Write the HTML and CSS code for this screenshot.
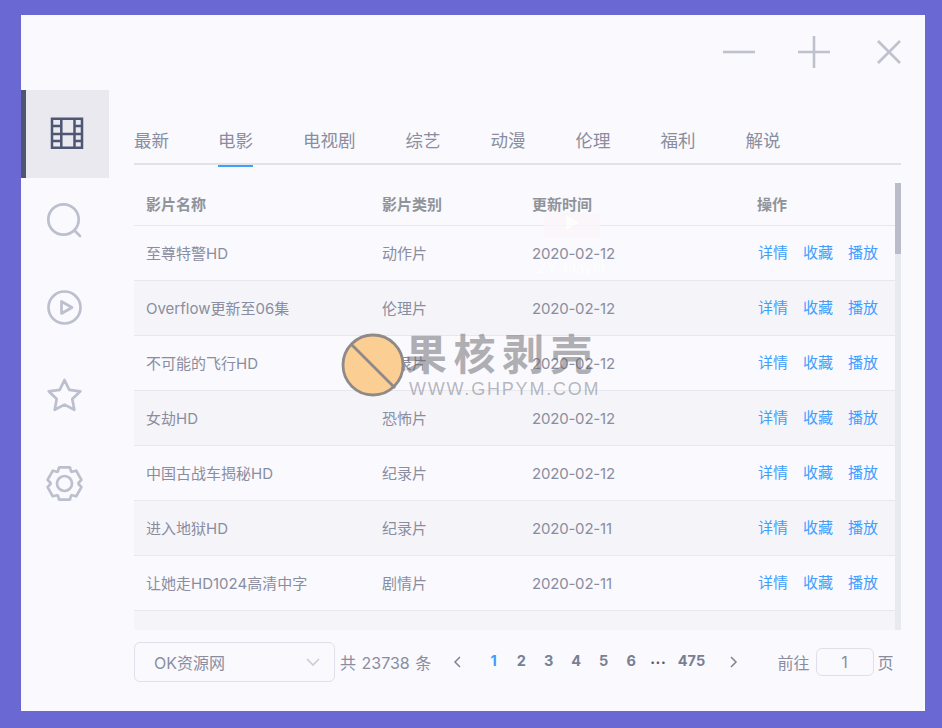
FILE: index.html
```html
<!DOCTYPE html>
<html lang="zh-CN">
<head>
<meta charset="utf-8">
<title>ZY Player</title>
<link rel="stylesheet" href="styles.css">
</head>
<body>
<div class="window">
  <nav class="sidebar">
    <div class="nav-item active">
      <svg class="nav-icon film" viewBox="0 0 36 36"><path d="M5 4.700h30v29.100H5zM14.300 4.700v29.100M27.500 4.700v29.100M5 12h9.300M5 20h9.300M5 27h9.300M27.500 12H35M27.500 20H35M27.500 27H35M14.300 20h13.200"/></svg>
    </div>
    <div class="nav-item">
      <svg class="nav-icon" viewBox="0 0 36 36"><circle cx="16.500" cy="17.500" r="15.200"/><path d="M28 29l5 5"/></svg>
    </div>
    <div class="nav-item">
      <svg class="nav-icon" viewBox="0 0 36 36"><circle cx="17.500" cy="17.500" r="16"/><path d="M14.500 11.500v12l10.500-6z"/></svg>
    </div>
    <div class="nav-item">
      <svg class="nav-icon" viewBox="0 0 36 36"><path d="M17.500 2l4.800 9.800 11 1.500-8 7.700 2 10.800-9.800-5.200-9.800 5.200 2-10.800-8-7.700 11-1.500z"/></svg>
    </div>
    <div class="nav-item">
      <svg class="nav-icon" viewBox="0 0 36 36"><circle cx="17.500" cy="17.500" r="7.500"/><path d="M12.100 1.400H22.900L24.100 5.300 24.900 5.800 29.200 4.700 34.400 13.900 31.500 17V18L34.400 21.100 29.200 30.300 24.900 29.200 24.100 29.700 22.900 33.600H12.100L10.900 29.700 10.100 29.200 5.800 30.300 .6 21.100 3.500 18V17L.6 13.900 5.800 4.700 10.100 5.800 10.900 5.300z"/></svg>
    </div>
  </nav>
  <main class="main">
    <header class="topbar">
      <svg class="win-icon" viewBox="0 0 32 32"><path d="M0 16h32"/></svg>
      <svg class="win-icon" viewBox="0 0 32 32"><path d="M0 16h32M16 0v32"/></svg>
      <svg class="win-icon close" viewBox="0 0 24 24"><path d="M1 1l22 22M23 1L1 23"/></svg>
    </header>
    <div class="tabs">
      <span class="tab first">最新</span>
      <span class="tab current">电影</span>
      <span class="tab">电视剧</span>
      <span class="tab">综艺</span>
      <span class="tab">动漫</span>
      <span class="tab">伦理</span>
      <span class="tab">福利</span>
      <span class="tab">解说</span>
    </div>
    <div class="table-wrap">
      <div class="table-scroll">
        <table class="films">
          <colgroup><col class="c1"><col class="c2"><col class="c3"><col class="c4"></colgroup>
          <thead>
            <tr><th>影片名称</th><th>影片类别</th><th>更新时间</th><th>操作</th></tr>
          </thead>
          <tbody>
            <tr><td>至尊特警HD</td><td>动作片</td><td class="date">2020-02-12</td><td class="ops"><a>详情</a><a>收藏</a><a>播放</a></td></tr>
            <tr><td>Overflow更新至06集</td><td>伦理片</td><td class="date">2020-02-12</td><td class="ops"><a>详情</a><a>收藏</a><a>播放</a></td></tr>
            <tr><td>不可能的飞行HD</td><td>纪录片</td><td class="date">2020-02-12</td><td class="ops"><a>详情</a><a>收藏</a><a>播放</a></td></tr>
            <tr><td>女劫HD</td><td>恐怖片</td><td class="date">2020-02-12</td><td class="ops"><a>详情</a><a>收藏</a><a>播放</a></td></tr>
            <tr><td>中国古战车揭秘HD</td><td>纪录片</td><td class="date">2020-02-12</td><td class="ops"><a>详情</a><a>收藏</a><a>播放</a></td></tr>
            <tr><td>进入地狱HD</td><td>纪录片</td><td class="date">2020-02-11</td><td class="ops"><a>详情</a><a>收藏</a><a>播放</a></td></tr>
            <tr><td>让她走HD1024高清中字</td><td>剧情片</td><td class="date">2020-02-11</td><td class="ops"><a>详情</a><a>收藏</a><a>播放</a></td></tr>
            <tr><td>&nbsp;</td><td></td><td></td><td></td></tr>
          </tbody>
        </table>
      </div>
      <div class="scrollbar"><div class="thumb"></div></div>
    </div>
    <footer class="pager">
      <div class="select">
        <span>OK资源网</span>
        <svg class="chevron" viewBox="0 0 14 8"><path d="M1 1l6 6 6-6"/></svg>
      </div>
      <span class="total">共 23738 条</span>
      <svg class="arrow prev" viewBox="0 0 8 12"><path d="M7 1L2 6l5 5"/></svg>
      <div class="pages">
        <span class="page on">1</span>
        <span class="page">2</span>
        <span class="page">3</span>
        <span class="page">4</span>
        <span class="page">5</span>
        <span class="page">6</span>
        <span class="page dots">•••</span>
        <span class="page last">475</span>
      </div>
      <svg class="arrow next" viewBox="0 0 8 12"><path d="M1 1l5 5-5 5"/></svg>
      <div class="jump">
        <span>前往</span>
        <span class="jump-input">1</span>
        <span>页</span>
      </div>
    </footer>
  </main>
</div>
<div class="ghost-logo">
  <div class="ghost-mark"><svg class="ghost-play" viewBox="0 0 16 16"><path d="M1 0l14 8-14 8z"/></svg></div>
  <span>ZY-Player</span>
</div>
<div class="watermark">
  <svg class="wm-badge" viewBox="0 0 64 64"><circle cx="32" cy="32" r="30" /><path d="M10 11l44 44"/></svg>
  <div class="wm-text">
    <div class="wm-cn">果核剥壳</div>
    <div class="wm-en">WWW.GHPYM.COM</div>
  </div>
</div>
</body>
</html>
```

FILE: styles.css
```css
* { box-sizing: border-box; }
html, body { margin: 0; height: 100%; }
body {
  position: relative;
  height: 728px;
  overflow: hidden;
  background: #6a69d3;
  padding: 15px 17px 17px 21px;
  font-family: Inter, "Noto Sans CJK SC", sans-serif;
  color: #8a8d9f;
}
.window {
  display: flex;
  width: 904px;
  height: 696px;
  background: #f9f9fe;
}
.sidebar {
  flex: 0 0 88px;
  padding-top: 75px;
}
.nav-item {
  display: flex;
  align-items: center;
  justify-content: center;
  height: 88px;
  padding-bottom: 4px;
}
.nav-item.active {
  background: #e9e9ef;
  box-shadow: inset 5px 0 0 #4f5674;
}
.nav-icon {
  width: 36px;
  height: 36px;
  overflow: visible;
  fill: none;
  stroke: #bcc0ce;
  stroke-width: 2.700;
  stroke-linejoin: round;
  stroke-linecap: round;
}
.film {
  stroke: #4f5674;
  stroke-width: 2.500;
  stroke-linecap: butt;
  stroke-linejoin: miter;
}
.main {
  flex: 1;
  min-width: 0;
  padding: 0 24px 0 25px;
}
.topbar {
  display: flex;
  justify-content: flex-end;
  align-items: center;
  gap: 43px;
  height: 73px;
}
.win-icon {
  width: 32px;
  height: 32px;
  fill: none;
  stroke: #bfc2cd;
  stroke-width: 2.600;
}
.win-icon.close {
  width: 24px;
  height: 24px;
  margin-left: 4px;
}
.tabs {
  display: flex;
  gap: 50px;
  height: 77px;
  padding-top: 36px;
  border-bottom: 2px solid #e1e3ec;
}
.tab {
  position: relative;
  height: 41px;
  font-size: 17.500px;
  line-height: 33px;
  color: #8a8d9f;
}
.tab.first { margin-right: -1px; }
.tab.current::after {
  content: "";
  position: absolute;
  left: 0;
  right: 0;
  bottom: -2px;
  height: 2px;
  background: #409eff;
}
.table-wrap {
  display: flex;
  height: 447px;
  margin-top: 18px;
}
.table-scroll {
  flex: 1;
  min-width: 0;
  overflow: hidden;
}
.films {
  width: 761px;
  table-layout: fixed;
  border-collapse: collapse;
}
.c1 { width: 236px; }
.c2 { width: 150px; }
.c3 { width: 225px; }
.c4 { width: 150px; }
.films th {
  height: 42px;
  padding: 0 12px;
  text-align: left;
  font-size: 15px;
  font-weight: 700;
  color: #909399;
  border-bottom: 1px solid #e6e7ef;
}
.films td {
  height: 55px;
  padding: 0 12px;
  font-size: 15px;
  white-space: nowrap;
  color: #8a8d9f;
  border-bottom: 1px solid #e6e7ef;
}
.films tbody tr:nth-child(even) td { background: #f5f5f9; }
.films td.date {
  padding-top: 2px;
  letter-spacing: -0.200px;
}
.films td.ops {
  padding-left: 13px;
  padding-bottom: 2px;
}
.ops a {
  display: inline-block;
  width: 45px;
  color: #409eff;
}
.scrollbar {
  flex: 0 0 6px;
  background: #e9e9f0;
}
.thumb {
  height: 71px;
  background: #babdc9;
}
.pager {
  display: flex;
  align-items: center;
  height: 40px;
  margin-top: 12px;
  font-size: 16px;
}
.select {
  display: flex;
  align-items: center;
  justify-content: space-between;
  flex: 0 0 201px;
  height: 40px;
  padding: 0 14px 0 19px;
  border: 1px solid #dfe0ea;
  border-radius: 6px;
}
.chevron {
  width: 14px;
  height: 8px;
  fill: none;
  stroke: #c8cad6;
  stroke-width: 1.500;
}
.total {
  flex: 0 0 113px;
  margin-left: 5px;
  white-space: nowrap;
  word-spacing: 1px;
}
.arrow {
  flex: 0 0 8px;
  width: 8px;
  height: 12px;
  fill: none;
  stroke: #7f8396;
  stroke-width: 1.500;
}
.pages {
  display: flex;
  margin-left: 19px;
}
.page {
  width: 27.500px;
  text-align: center;
  font-size: 14.500px;
  font-weight: 700;
  color: #7a7f92;
}
.page.on { color: #409eff; }
.page.dots {
  font-size: 8px;
  letter-spacing: 1.500px;
  line-height: 21px;
  color: #555a6e;
}
.page.last { width: 38px; }
.next { margin-left: 19px; }
.jump {
  display: flex;
  align-items: center;
  margin-left: 40px;
}
.jump-input {
  flex: 0 0 58px;
  height: 28px;
  margin: 0 4px 0 6px;
  border: 1px solid #dfe0ea;
  border-radius: 6px;
  text-align: center;
  line-height: 26px;
}
.ghost-logo {
  position: absolute;
  left: 522px;
  top: 213px;
  width: 100px;
  color: #fff;
  font-size: 15px;
  line-height: 20px;
  text-align: center;
  opacity: 0.8;
}
.ghost-mark {
  width: 56px;
  height: 24px;
  margin: 0 auto 21px;
  padding-top: 2px;
  background: #fbf6f9;
}
.ghost-play {
  display: block;
  width: 15px;
  height: 15px;
  margin: 0 auto;
  fill: #fff;
}
.watermark {
  position: absolute;
  left: 341px;
  top: 333px;
  display: flex;
  pointer-events: none;
}
.wm-badge {
  width: 64px;
  height: 64px;
  fill: #fbcf93;
  stroke: #8f8a88;
  stroke-width: 2.800;
}
.wm-cn {
  margin-top: 1px;
  font-size: 42px;
  line-height: 42px;
  font-weight: 700;
  letter-spacing: 6.500px;
  color: rgba(100, 100, 105, 0.5);
  white-space: nowrap;
}
.wm-en {
  margin: 5px 0 0 4px;
  font-family: "Liberation Sans", sans-serif;
  font-size: 18px;
  line-height: 16px;
  letter-spacing: 1.800px;
  color: rgba(100, 100, 105, 0.45);
  white-space: nowrap;
}
```
